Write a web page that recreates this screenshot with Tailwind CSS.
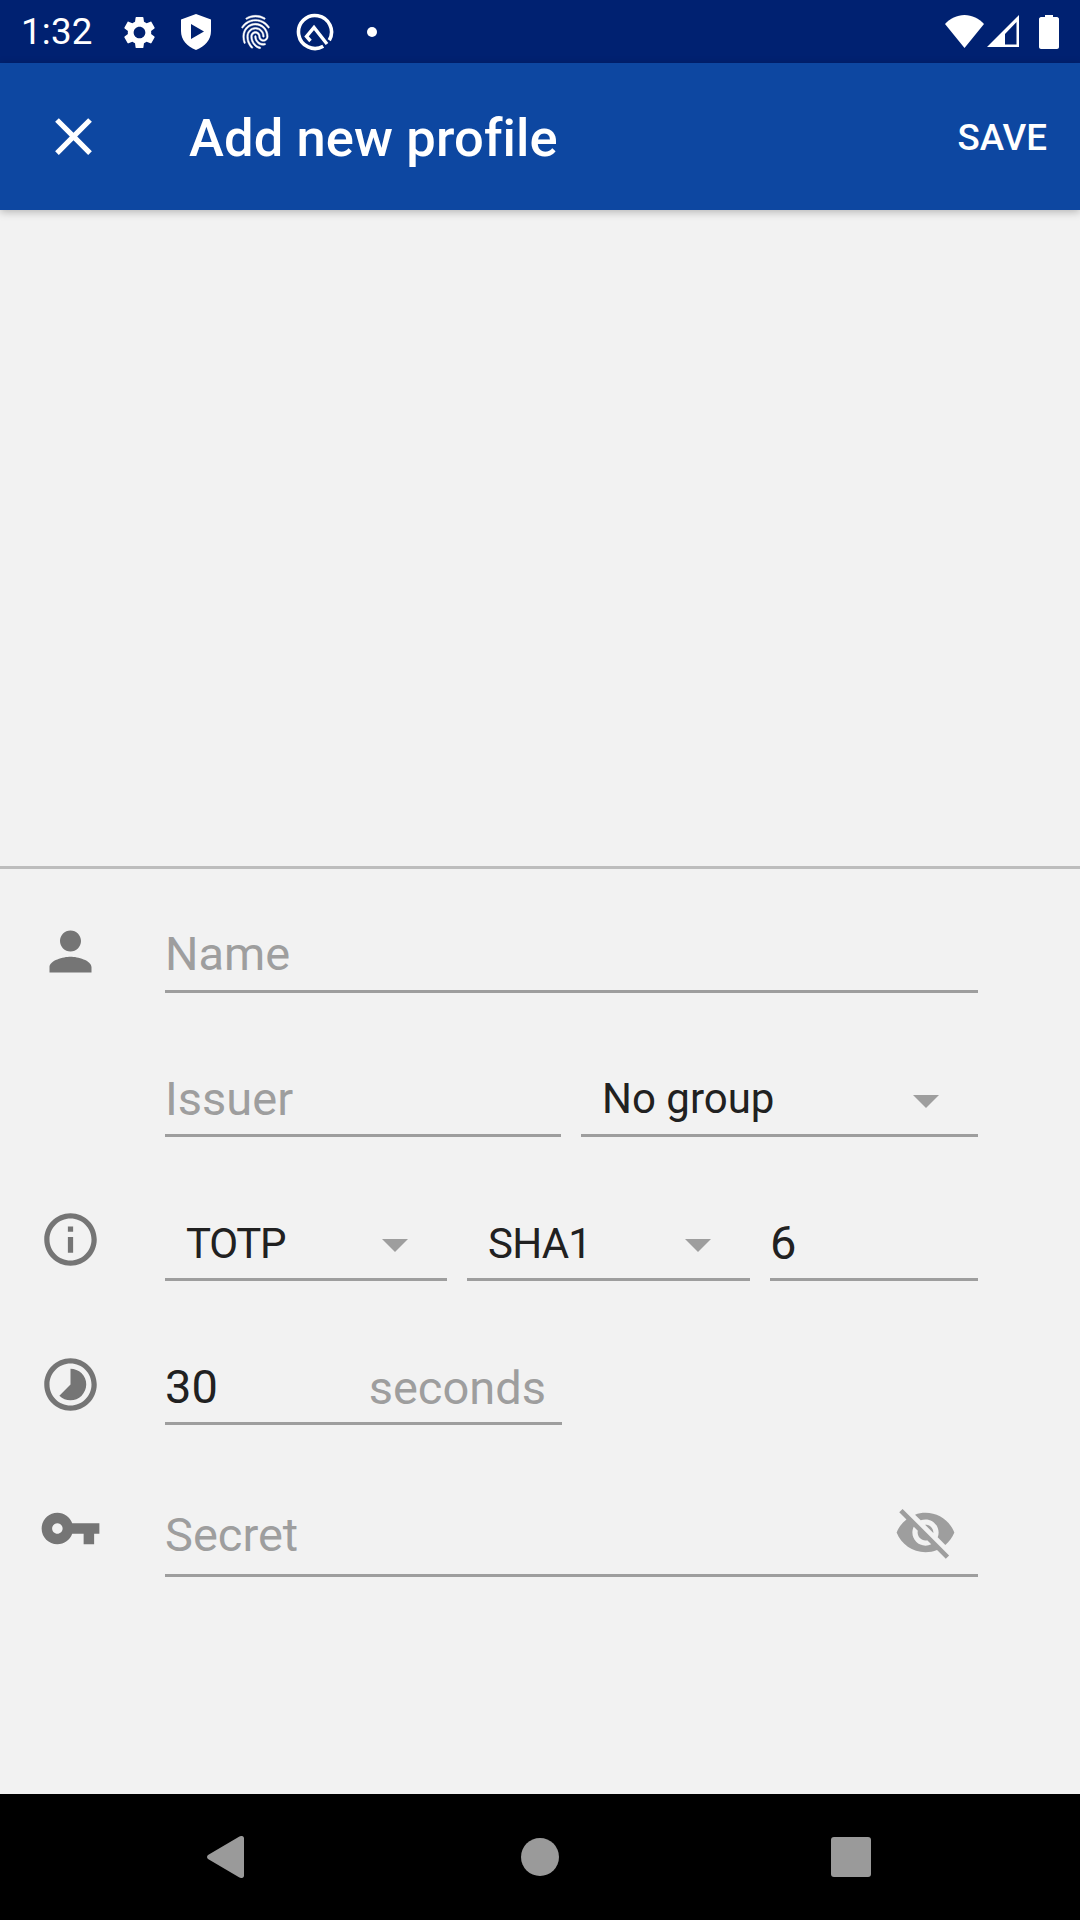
<!DOCTYPE html>
<html lang="en">
  <head>
    <meta charset="UTF-8">
    <title>Add new profile</title>
    <script src="https://cdn.jsdelivr.net/npm/@tailwindcss/browser@4"></script>
  </head>

<body class="w-[1080px] h-[1920px] flex flex-col overflow-hidden bg-[#f2f2f2] font-['Roboto',sans-serif]">

  <!-- Status bar -->
  <div class="h-[63px] shrink-0 bg-[#002171] flex items-center text-white">
    <span class="ml-[21px] mt-[1px] w-[84px] text-[36.75px] leading-none tracking-[0.2px]">1:32</span>
    <svg class="ml-[15px] mt-[1px] w-[39px] h-[39px]" viewBox="0 0 24 24" fill="currentColor"><path d="M19.14 12.94c.04-.3.06-.61.06-.94 0-.32-.02-.64-.07-.94l2.03-1.58c.18-.14.23-.41.12-.61l-1.92-3.32c-.12-.22-.37-.29-.59-.22l-2.39.96c-.5-.38-1.03-.7-1.62-.94l-.36-2.54c-.04-.24-.24-.41-.48-.41h-3.84c-.24 0-.43.17-.47.41l-.36 2.54c-.59.24-1.13.57-1.62.94l-2.39-.96c-.22-.08-.47 0-.59.22L2.74 8.87c-.12.21-.08.47.12.61l2.03 1.58c-.05.3-.09.63-.09.94s.02.64.07.94l-2.03 1.58c-.18.14-.23.41-.12.61l1.92 3.32c.12.22.37.29.59.22l2.39-.96c.5.38 1.03.7 1.62.94l.36 2.54c.05.24.24.41.48.41h3.84c.24 0 .44-.17.47-.41l.36-2.54c.59-.24 1.13-.56 1.62-.94l2.39.96c.22.08.47 0 .59-.22l1.92-3.32c.12-.22.07-.47-.12-.61l-2.01-1.58zM12 15.6c-1.98 0-3.6-1.62-3.6-3.6s1.62-3.6 3.6-3.6 3.6 1.62 3.6 3.6-1.62 3.6-3.6 3.6z"/></svg>
    <svg class="ml-[22px] w-[30px] h-[36px]" viewBox="0 0 30 36" fill="currentColor"><path fill-rule="evenodd" d="M15 0 L30 5.5 V17 C30 26 24 32.5 15 36 C6 32.5 0 26 0 17 V5.5 Z M10 10 V25 L23 17.5 Z"/></svg>
    <svg class="ml-[26px] w-[37px] h-[40px]" viewBox="0 0 24 24" preserveAspectRatio="none" fill="currentColor" stroke="currentColor" stroke-width="0.3"><path d="M17.81 4.47c-.08 0-.16-.02-.23-.06C15.66 3.42 14 3 12.01 3c-1.98 0-3.86.47-5.57 1.41-.24.13-.54.04-.68-.2-.13-.24-.04-.55.2-.68C7.82 2.52 9.86 2 12.01 2c2.13 0 3.99.47 6.03 1.52.25.13.34.43.21.67-.09.18-.26.28-.44.28zM3.5 9.72c-.1 0-.2-.03-.29-.09-.23-.16-.28-.47-.12-.7.99-1.4 2.25-2.5 3.75-3.27C9.98 4.04 14 4.03 17.15 5.65c1.5.77 2.76 1.86 3.75 3.25.16.22.11.54-.12.7-.23.16-.54.11-.7-.12-.9-1.26-2.04-2.25-3.39-2.94-2.87-1.47-6.54-1.47-9.4.01-1.36.7-2.5 1.7-3.4 2.96-.08.14-.23.21-.39.21zm6.25 12.07c-.13 0-.26-.05-.35-.15-.87-.87-1.34-1.43-2.01-2.64-.69-1.23-1.05-2.73-1.05-4.34 0-2.97 2.54-5.39 5.66-5.39s5.66 2.42 5.66 5.39c0 .28-.22.5-.5.5s-.5-.22-.5-.5c0-2.42-2.09-4.39-4.66-4.39-2.57 0-4.66 1.97-4.66 4.39 0 1.44.32 2.77.93 3.85.64 1.15 1.08 1.64 1.85 2.42.19.2.19.51 0 .71-.11.1-.24.15-.37.15zm7.17-1.85c-1.19 0-2.24-.3-3.1-.89-1.49-1.01-2.38-2.65-2.38-4.39 0-.28.22-.5.5-.5s.5.22.5.5c0 1.41.72 2.74 1.94 3.56.71.48 1.54.71 2.54.71.24 0 .64-.03 1.04-.1.27-.05.53.13.58.41.05.27-.13.53-.41.58-.57.11-1.07.12-1.21.12zM14.91 22c-.04 0-.09-.01-.13-.02-1.59-.44-2.63-1.03-3.72-2.1-1.4-1.39-2.17-3.24-2.17-5.22 0-1.62 1.38-2.94 3.08-2.94 1.7 0 3.08 1.32 3.08 2.94 0 1.07.93 1.94 2.08 1.94s2.08-.87 2.08-1.94c0-3.77-3.25-6.83-7.25-6.83-2.84 0-5.44 1.58-6.61 4.03-.39.81-.59 1.76-.59 2.8 0 .78.07 2.01.67 3.61.1.26-.03.55-.29.64-.26.1-.55-.04-.64-.29-.49-1.31-.73-2.61-.73-3.96 0-1.2.23-2.29.68-3.24 1.33-2.79 4.28-4.6 7.51-4.6 4.55 0 8.25 3.51 8.25 7.83 0 1.62-1.38 2.94-3.08 2.94s-3.08-1.32-3.08-2.94c0-1.07-.93-1.94-2.08-1.94s-2.08.87-2.08 1.94c0 1.71.66 3.31 1.87 4.51.95.94 1.86 1.46 3.27 1.85.27.07.42.35.35.61-.05.23-.26.38-.47.38z"/></svg>
    <svg class="ml-[22px] w-[38px] h-[38px]" viewBox="0 0 38 38" fill="none" stroke="currentColor" stroke-width="3.6"><path d="M27.25 33.3 A16.5 16.5 0 1 1 33.3 27.25"/><path d="M14.5 28 L10.5 23.5 L18 14.5 L31 31" stroke-width="3.4"/></svg>
    <span class="ml-[33px] w-[10px] h-[10px] rounded-full bg-white"></span>
    <div class="ml-auto mr-[21px] flex items-center">
      <svg class="w-[39px] h-[33px]" viewBox="0 0 39 33" fill="currentColor"><path d="M0 9 C5 3.5 12 0 19.5 0 C27 0 34 3.5 39 9 L19.5 33 Z"/></svg>
      <svg class="ml-[3px] w-[33px] h-[33px]" viewBox="0 0 33 33" fill="currentColor"><path fill-rule="evenodd" d="M32 0 V32 H0 Z M29.5 7 L18 19 V29.5 H29.5 Z"/></svg>
      <svg class="ml-[19px] w-[20px] h-[34px]" viewBox="0 0 20 34" fill="currentColor"><path d="M6 0 H14 V2 H18 C19 2 20 3 20 4 V32 C20 33 19 34 18 34 H2 C1 34 0 33 0 32 V4 C0 3 1 2 2 2 H6 Z"/></svg>
    </div>
  </div>

  <!-- App bar -->
  <div class="h-[147px] shrink-0 bg-[#0d47a1] shadow-[0_2px_8px_rgba(0,0,0,0.25)] flex items-center text-white relative">
    <svg class="ml-[42px] w-[63px] h-[63px]" viewBox="0 0 24 24" fill="currentColor"><path d="M19 6.41L17.59 5 12 10.59 6.41 5 5 6.41 10.59 12 5 17.59 6.41 19 12 13.41 17.59 19 19 17.59 13.41 12z"/></svg>
    <span class="ml-[84px] mt-[4px] text-[52.5px] font-medium leading-none tracking-[0.12px]">Add new profile</span>
    <span class="ml-auto mr-[33px] mt-[4px] text-[36.75px] font-medium leading-none">SAVE</span>
  </div>

  <!-- Empty preview area -->
  <div class="h-[659px] shrink-0 border-b-[3px] border-[#bdbdbd]"></div>

  <!-- Form -->
  <div class="flex-1 flex flex-col pt-[24px] pl-[39px] pr-[102px] text-[47px] leading-none text-[#212121]">

    <div class="flex h-[100px] gap-[63px]">
      <svg class="mt-[27px] w-[63px] h-[63px] shrink-0 text-[#757575]" viewBox="0 0 24 24" fill="currentColor"><path d="M12 12c2.21 0 4-1.79 4-4s-1.79-4-4-4-4 1.79-4 4 1.79 4 4 4zm0 2c-2.67 0-8 1.34-8 4v2h16v-2c0-2.66-5.33-4-8-4z"/></svg>
      <div class="flex-1 flex items-end pb-[13px] border-b-[3px] border-[#9e9e9e] text-[#9e9e9e]">Name</div>
    </div>

    <div class="flex h-[100px] mt-[44px] pl-[126px] gap-[20px]">
      <div class="w-[396px] flex items-end pb-[12px] border-b-[3px] border-[#9e9e9e] text-[#9e9e9e]">Issuer</div>
      <div class="flex-1 flex items-end justify-between pb-[14px] pl-[21px] pr-[39px] border-b-[3px] border-[#9e9e9e] text-[42px]">
        <span>No group</span>
        <span class="mb-[12px] w-0 h-0 border-x-[13px] border-t-[13px] border-x-transparent border-t-[#9e9e9e]"></span>
      </div>
    </div>

    <div class="flex h-[100px] mt-[44px] gap-[63px]">
      <svg class="mt-[27px] w-[63px] h-[63px] shrink-0 text-[#757575]" viewBox="0 0 24 24" fill="currentColor"><path d="M11 7h2v2h-2zm0 4h2v6h-2zm1-9C6.48 2 2 6.48 2 12s4.48 10 10 10 10-4.48 10-10S17.52 2 12 2zm0 18c-4.41 0-8-3.59-8-8s3.59-8 8-8 8 3.59 8 8-3.59 8-8 8z"/></svg>
      <div class="flex-1 flex gap-[20px]">
        <div class="w-[282px] flex items-end justify-between pb-[13px] pl-[21px] pr-[39px] border-b-[3px] border-[#9e9e9e] text-[42px]">
          <span class="tracking-[-1.3px]">TOTP</span>
          <span class="mb-[13px] w-0 h-0 border-x-[13px] border-t-[13px] border-x-transparent border-t-[#9e9e9e]"></span>
        </div>
        <div class="w-[283px] flex items-end justify-between pb-[13px] pl-[21px] pr-[39px] border-b-[3px] border-[#9e9e9e] text-[42px]">
          <span class="tracking-[-0.8px]">SHA1</span>
          <span class="mb-[13px] w-0 h-0 border-x-[13px] border-t-[13px] border-x-transparent border-t-[#9e9e9e]"></span>
        </div>
        <div class="flex-1 flex items-end pb-[12px] border-b-[3px] border-[#9e9e9e]">6</div>
      </div>
    </div>

    <div class="flex h-[100px] mt-[44px] gap-[63px]">
      <svg class="mt-[28px] w-[63px] h-[63px] shrink-0 text-[#757575]" viewBox="0 0 24 24" fill="currentColor"><path d="M16.24 7.76C15.07 6.59 13.54 6 12 6v6l-4.24 4.24c2.34 2.34 6.14 2.34 8.49 0 2.34-2.34 2.34-6.14-.01-8.48zM12 2C6.48 2 2 6.48 2 12s4.48 10 10 10 10-4.48 10-10S17.52 2 12 2zm0 18c-4.42 0-8-3.58-8-8s3.58-8 8-8 8 3.58 8 8-3.58 8-8 8z"/></svg>
      <div class="w-[397px] flex items-end justify-between pb-[12px] pr-[16px] border-b-[3px] border-[#9e9e9e]">
        <span>30</span>
        <span class="-mb-[1px] text-[#9e9e9e]">seconds</span>
      </div>
    </div>

    <div class="flex h-[100px] mt-[52px] gap-[63px]">
      <svg class="mt-[20px] w-[63px] h-[63px] shrink-0 text-[#757575]" viewBox="0 0 24 24" fill="currentColor"><path d="M12.65 10C11.83 7.67 9.61 6 7 6c-3.31 0-6 2.69-6 6s2.69 6 6 6c2.61 0 4.83-1.67 5.65-4H17v4h4v-4h2v-4H12.65zM7 14c-1.1 0-2-.9-2-2s.9-2 2-2 2 .9 2 2-.9 2-2 2z"/></svg>
      <div class="flex-1 flex items-end justify-between pb-[16px] pr-[21px] border-b-[3px] border-[#9e9e9e] text-[#9e9e9e]">
        <span>Secret</span>
        <svg class="mb-[-6px] w-[63px] h-[63px]" viewBox="0 0 24 24" fill="currentColor"><path d="M12 7c2.76 0 5 2.24 5 5 0 .65-.13 1.26-.36 1.83l2.92 2.92c1.51-1.26 2.7-2.89 3.43-4.75-1.73-4.39-6-7.5-11-7.5-1.4 0-2.74.25-3.98.7l2.16 2.16C10.74 7.13 11.35 7 12 7zM2 4.27l2.28 2.28.46.46C3.08 8.3 1.78 10.02 1 12c1.73 4.39 6 7.5 11 7.5 1.55 0 3.03-.3 4.38-.84l.42.42L19.73 22 21 20.73 3.27 3 2 4.27zM7.53 9.8l1.55 1.55c-.05.21-.08.43-.08.65 0 1.66 1.34 3 3 3 .22 0 .44-.03.65-.08l1.55 1.55c-.67.33-1.41.53-2.2.53-2.76 0-5-2.24-5-5 0-.79.2-1.53.53-2.2zm4.31-.78l3.15 3.15.02-.16c0-1.66-1.34-3-3-3l-.17.01z"/></svg>
      </div>
    </div>
  </div>

  <!-- Navigation bar -->
  <div class="h-[126px] shrink-0 bg-black flex items-center">
    <svg class="ml-[207px] w-[37px] h-[42px]" viewBox="0 0 37 42" fill="#9a9a9a"><path d="M1 23 C-0.3 21.8 -0.3 20.2 1 19 L32 0.8 C34.5 -0.8 37 0 37 2.5 V39.5 C37 42 34.5 42.8 32 41.2 Z"/></svg>
    <span class="ml-[277px] w-[38px] h-[38px] rounded-full bg-[#9a9a9a]"></span>
    <span class="ml-[272px] w-[40px] h-[40px] rounded-[3px] bg-[#9a9a9a]"></span>
  </div>

</body>
</html>
